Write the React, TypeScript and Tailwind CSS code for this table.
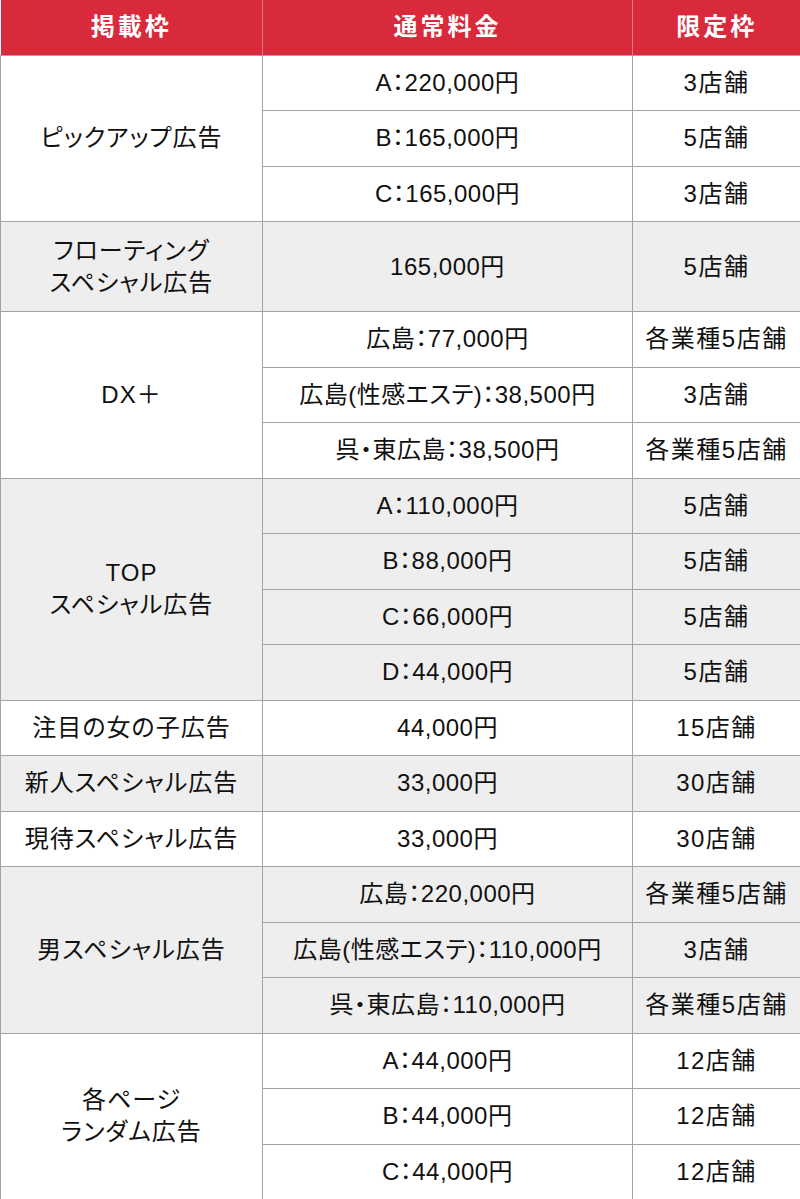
type Group = {
  name: string[];
  rows: [string, string][];
  tall?: boolean;
};

const groups: Group[] = [
  {
    name: ["ピックアップ広告"],
    rows: [
      ["A：220,000円", "3店舗"],
      ["B：165,000円", "5店舗"],
      ["C：165,000円", "3店舗"],
    ],
  },
  {
    name: ["フローティング", "スペシャル広告"],
    rows: [["165,000円", "5店舗"]],
    tall: true,
  },
  {
    name: ["DX＋"],
    rows: [
      ["広島：77,000円", "各業種5店舗"],
      ["広島(性感エステ)：38,500円", "3店舗"],
      ["呉・東広島：38,500円", "各業種5店舗"],
    ],
  },
  {
    name: ["TOP", "スペシャル広告"],
    rows: [
      ["A：110,000円", "5店舗"],
      ["B：88,000円", "5店舗"],
      ["C：66,000円", "5店舗"],
      ["D：44,000円", "5店舗"],
    ],
  },
  { name: ["注目の女の子広告"], rows: [["44,000円", "15店舗"]] },
  { name: ["新人スペシャル広告"], rows: [["33,000円", "30店舗"]] },
  { name: ["現待スペシャル広告"], rows: [["33,000円", "30店舗"]] },
  {
    name: ["男スペシャル広告"],
    rows: [
      ["広島：220,000円", "各業種5店舗"],
      ["広島(性感エステ)：110,000円", "3店舗"],
      ["呉・東広島：110,000円", "各業種5店舗"],
    ],
  },
  {
    name: ["各ページ", "ランダム広告"],
    rows: [
      ["A：44,000円", "12店舗"],
      ["B：44,000円", "12店舗"],
      ["C：44,000円", "12店舗"],
    ],
  },
];

const cell = "border border-[#a3a3a3] text-center align-middle";

export default function App() {
  return (
    <div className="w-[800px] bg-white font-['Liberation_Sans','Noto_Sans_CJK_JP',sans-serif] text-[24px] leading-[32px] text-[#111] [font-feature-settings:'palt']">
      <table className="w-[800px] table-fixed border-collapse">
        <colgroup>
          <col className="w-[262px]" />
          <col className="w-[370px]" />
          <col className="w-[168px]" />
        </colgroup>
        <thead>
          <tr className="h-[55px] bg-[#d92a3b] font-bold text-white tracking-[3px]">
            <th className="border-r border-[#e07a84] text-center">掲載枠</th>
            <th className="border-r border-[#e07a84] text-center">通常料金</th>
            <th className="text-center">限定枠</th>
          </tr>
        </thead>
        <tbody>
          {groups.map((g, gi) => {
            const bg = gi % 2 === 1 ? "bg-[#eeeeee]" : "bg-white";
            return g.rows.map((r, ri) => (
              <tr key={`${gi}-${ri}`} className={`${bg} ${g.tall ? "h-[90px]" : "h-[55.5px]"}`}>
                {ri === 0 && (
                  <td rowSpan={g.rows.length} className={`${cell} tracking-[1px]`}>
                    {g.name.map((n) => (
                      <div key={n}>{n}</div>
                    ))}
                  </td>
                )}
                <td className={`${cell} tracking-[0.5px]`}>{r[0]}</td>
                <td className={`${cell} tracking-[1.5px]`}>{r[1]}</td>
              </tr>
            ));
          })}
        </tbody>
      </table>
    </div>
  );
}
